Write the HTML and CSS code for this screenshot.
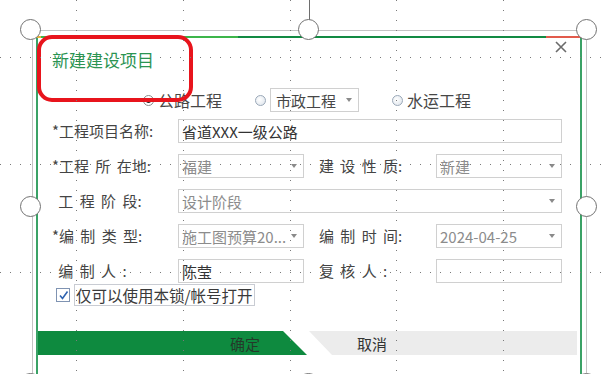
FILE: index.html
```html
<!DOCTYPE html>
<html>
<head>
    <meta charset="utf-8">
    <title>新建建设项目</title>
    <link rel="stylesheet" href="styles.css">
</head>
<body>
<div class="slide">
    <div class="sel-frame"></div>
    <div class="rotate-stem"></div>

    <div class="dialog">
        <div class="dialog-top"></div>
        <div class="dialog-head">
            <h1 class="title">新建建设项目</h1>
            <svg class="close" width="12" height="12" viewBox="0 0 12 12">
                <path d="M1 1 L11 11 M11 1 L1 11" stroke="#6b6b6b" stroke-width="1.6" fill="none"/>
            </svg>
        </div>

        <div class="type-row">
            <label class="radio"><span class="dot checked"></span>公路工程</label>
            <label class="radio"><span class="dot"></span><span class="field select small">市政工程<i class="arrow"></i></span></label>
            <label class="radio"><span class="dot"></span>水运工程</label>
        </div>

        <div class="form-grid">
            <span class="label">*工程项目名称:</span>
            <span class="field wide">省道XXX一级公路</span>

            <span class="label">*工程 所 在地:</span>
            <span class="field select">福建<i class="arrow"></i></span>
            <span class="label second">建 设 性 质:</span>
            <span class="field select">新建<i class="arrow"></i></span>

            <span class="label"> 工 程 阶 段:</span>
            <span class="field select wide">设计阶段<i class="arrow"></i></span>

            <span class="label">*编 制 类 型:</span>
            <span class="field select">施工图预算20...<i class="arrow"></i></span>
            <span class="label second">编 制 时 间:</span>
            <span class="field select">2024-04-25<i class="arrow"></i></span>

            <span class="label"> 编 制 人 :</span>
            <span class="field">陈莹</span>
            <span class="label second">复 核 人 :</span>
            <span class="field"></span>
        </div>

        <div class="lock-row">
            <span class="checkbox">
                <svg width="11" height="11" viewBox="0 0 11 11">
                    <path d="M2 5.5 L4.5 8.5 L9.5 1.5" stroke="#2f63b0" stroke-width="1.6" fill="none"/>
                </svg>
            </span>
            <span class="lock-text">仅可以使用本锁/帐号打开</span>
        </div>

        <div class="btn-row">
            <div class="btn ok">确定</div>
            <div class="btn cancel">取消</div>
        </div>
    </div>

    <div class="annotation"></div>

    <div class="grid-v g1"></div>
    <div class="grid-v g2"></div>
    <div class="grid-v g3"></div>
    <div class="grid-v g4"></div>
    <div class="grid-v g5"></div>
    <div class="grid-h g6"></div>
    <div class="grid-h g7"></div>
    <div class="grid-h g8"></div>

    <div class="handle h-tl"></div>
    <div class="handle h-tm"></div>
    <div class="handle h-tr"></div>
    <div class="handle h-ml"></div>
    <div class="handle h-mr"></div>
    <div class="handle h-bl"></div>
    <div class="handle h-bm"></div>
    <div class="handle h-br"></div>
</div>
</body>
</html>
```

FILE: styles.css
```css
body {
    margin: 0;
    background: #ffffff;
    font-family: "Noto Sans CJK SC", "Noto Sans", sans-serif;
}
.slide {
    position: relative;
    width: 607px;
    height: 374px;
    overflow: hidden;
    background: #ffffff;
}

/* selection frame of the picture on the slide */
.sel-frame {
    position: absolute;
    left: 32px;
    top: 30px;
    width: 553px;
    height: 360px;
    border: 1px solid #c4c4c4;
}
.rotate-stem {
    position: absolute;
    left: 309px;
    top: 0;
    width: 1px;
    height: 21px;
    background: #6e6e6e;
}
.handle {
    position: absolute;
    width: 19px;
    height: 19px;
    margin: -11px 0 0 -11px;
    border: 1.5px solid #727272;
    border-radius: 50%;
    background: #ffffff;
}
.h-tl { left: 31px; top: 30px; }
.h-tm { left: 309px; top: 30px; }
.h-tr { left: 587px; top: 30px; }
.h-ml { left: 31px; top: 207px; }
.h-mr { left: 587px; top: 207px; }
.h-bl { left: 31px; top: 384px; }
.h-bm { left: 309px; top: 384px; }
.h-br { left: 587px; top: 384px; }

/* dotted slide gridlines */
.grid-v {
    position: absolute;
    top: 0;
    width: 1px;
    height: 374px;
    background: repeating-linear-gradient(to bottom, #7a7a7a 0 1px, transparent 1px 10px);
}
.grid-h {
    position: absolute;
    left: 0;
    width: 607px;
    height: 1px;
    background: repeating-linear-gradient(to right, #7a7a7a 0 1px, transparent 1px 10px);
}
.g1 { left: 76px; }
.g2 { left: 183px; }
.g3 { left: 290px; }
.g4 { left: 396px; }
.g5 { left: 503px; }
.g6 { top: 57px; }
.g7 { top: 164px; }
.g8 { top: 272px; }

/* red marker drawn over the title */
.annotation {
    position: absolute;
    left: 37px;
    top: 35px;
    width: 148px;
    height: 59px;
    border: 4px solid #e8141c;
    border-radius: 15px;
}

/* the dialog picture */
.dialog {
    position: absolute;
    left: 36px;
    top: 36px;
    width: 546px;
    height: 360px;
    box-sizing: border-box;
    border-left: 2px solid #3aa266;
    border-right: 2px solid #3aa266;
    background: #ffffff;
    color: #444444;
}
.dialog-top {
    height: 2px;
    margin: 0 -2px;
    background: linear-gradient(to right, #e8b33a 0 5px, #3db54a 5px 202px, #128a43 202px 510px, #e25b4c 510px);
}
.dialog-head {
    display: flex;
    justify-content: space-between;
    align-items: flex-start;
}
.title {
    margin: 10px 0 0 14px;
    font-size: 17px;
    font-weight: normal;
    line-height: 24px;
    color: #2b9452;
}
.close {
    margin: 3px 13px 0 0;
}

.type-row {
    display: flex;
    align-items: center;
    height: 24px;
    margin: 16px 0 7px 105px;
    gap: 33px;
}
.radio {
    display: flex;
    align-items: center;
    font-size: 16px;
    color: #474747;
}
.dot {
    width: 9px;
    height: 9px;
    margin-right: 4px;
    border: 1px solid #9aa8b8;
    border-radius: 50%;
    background: radial-gradient(circle at 40% 40%, #ffffff, #dbe2ea);
    display: flex;
    align-items: center;
    justify-content: center;
}
.dot.checked {
    border-color: #8a8a8a;
    background: #ffffff;
}
.dot.checked::after {
    content: "";
    width: 5px;
    height: 5px;
    border-radius: 50%;
    background: #1e1e1e;
}

.form-grid {
    display: grid;
    grid-template-columns: 126px 126px 132px 126px;
    grid-auto-rows: 24px;
    row-gap: 11px;
    padding-left: 14px;
}
.label {
    font-size: 15px;
    line-height: 24px;
    white-space: pre;
    word-spacing: 3px;
    color: #444444;
}
.label.second {
    padding-left: 15px;
}
.field {
    display: flex;
    align-items: center;
    height: 24px;
    box-sizing: border-box;
    padding: 0 3px;
    border: 1px solid #d0d0d0;
    font-size: 15px;
    color: #333333;
    white-space: nowrap;
    overflow: hidden;
}
.field.select {
    color: #8c8c8c;
}
.field.wide {
    grid-column: 2 / 5;
}
.field.small {
    width: 89px;
    padding-left: 5px;
    color: #474747;
}
.arrow {
    margin-left: auto;
    margin-right: 3px;
    border-left: 3px solid transparent;
    border-right: 3px solid transparent;
    border-top: 4px solid #8a8a8a;
}

.lock-row {
    display: flex;
    align-items: center;
    margin: 1px 0 0 18px;
    height: 22px;
}
.checkbox {
    width: 12px;
    height: 12px;
    border: 1px solid #7f93b2;
    display: flex;
    align-items: center;
    justify-content: center;
    background: #ffffff;
}
.lock-text {
    margin-left: 4px;
    padding: 0 1px;
    border: 1px solid #c9ccd3;
    font-size: 15.5px;
    line-height: 20px;
    color: #3a3a3a;
}

.btn-row {
    display: flex;
    margin-top: 25px;
    height: 24px;
}
.btn {
    display: flex;
    align-items: center;
    font-size: 15px;
    color: #333333;
}
.ok {
    width: 269px;
    justify-content: flex-end;
    padding-right: 47px;
    box-sizing: border-box;
    background: #0e8a3f;
    color: #243a2a;
    clip-path: polygon(0 0, calc(100% - 24px) 0, 100% 100%, 0 100%);
}
.cancel {
    flex: 1;
    margin: 0 3px 0 2px;
    padding-left: 48px;
    background: #ececec;
    clip-path: polygon(0 0, 100% 0, 100% 100%, 23px 100%);
}
```
